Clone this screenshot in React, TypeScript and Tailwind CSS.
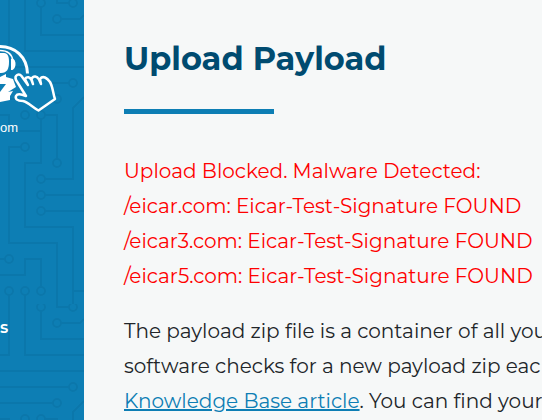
function CircuitBackground() {
  return (
    <svg
      className="absolute inset-0 h-full w-full"
      aria-hidden="true"
      fill="none"
      stroke="#0b77ab"
      strokeWidth="2"
    >
      <defs>
        <pattern id="circuit" width="84" height="304" patternUnits="userSpaceOnUse">
          <path d="M21 147H9V243H57V304M41 119V163H25V227H73V291H84M57 159V115H45M73 304V227" />
          <path d="M41 287V259H25V275H0M0 259H5M73 119V179H45M45 195H84M45 211H84" />
          <path d="M9 0V51H0M9 295V304M25 0V51H84M25 295V304M41 7V35H84M57 0V3H69" />
          <path d="M61 19H80L84 15M0 67H84M0 83H69M0 99H53M0 115H9V131H41M73 120V108L84 97" />
          <circle cx="41" cy="3" r="4" />
          <circle cx="73" cy="3" r="4" />
          <circle cx="57" cy="19" r="4" />
          <circle cx="73" cy="83" r="4" />
          <circle cx="57" cy="99" r="4" />
          <circle cx="25" cy="115" r="4" />
          <circle cx="41" cy="115" r="4" />
          <circle cx="25" cy="147" r="4" />
          <circle cx="57" cy="163" r="4" />
          <circle cx="41" cy="179" r="4" />
          <circle cx="41" cy="195" r="4" />
          <circle cx="41" cy="211" r="4" />
          <circle cx="9" cy="259" r="4" />
          <circle cx="9" cy="291" r="4" />
          <circle cx="25" cy="291" r="4" />
          <circle cx="41" cy="291" r="4" />
        </pattern>
      </defs>
      <rect width="100%" height="100%" fill="url(#circuit)" stroke="none" />
    </svg>
  );
}

function Logo() {
  return (
    <svg className="h-[74px] w-[60px]" viewBox="0 42 60 74" fill="none" aria-hidden="true">
      <path d="M-1 46.500C15 46 27 57 27.500 73.500" stroke="white" strokeWidth="3" />
      <path d="M0 50.500C8 50.500 12 54 13 61" stroke="white" strokeWidth="1.500" />
      <path d="M-1 53H4C8 53 9 57 9 62C9 69 7 73 1 73H-1Z" fill="white" />
      <path d="M11 59C14 58 15.500 61 15.500 64C15.500 68 13 70.500 11 70Z" fill="white" />
      <path d="M0 77L6 74L6 77L13 79L16 87L8 92L13 91L10 96L10 100L0 102V92L6 84L0 84Z" fill="white" />
      <path
        d="M16 80C14 75 19 73 21.500 76L28 85L25 79C27 76 30 77 31.500 80L33 84L31.500 79C33.500 75 37 76 39 79.500L41 84L40 79C43 75 47 78 50 82C53 87 53 94 55 99L38.500 110.500C32 107 28 102 23 101C17 101 15 99 16 96C17 94 21 94 26 96Z"
        fill="#0d7eb4"
        stroke="white"
        strokeWidth="2.500"
        strokeLinejoin="round"
      />
    </svg>
  );
}

export default function App() {
  return (
    <div className="flex h-screen overflow-hidden bg-[#f6f8f8] font-['Montserrat','Inter',sans-serif]">
      <aside className="relative w-21 shrink-0 overflow-hidden bg-[#0d7eb4] text-white">
        <CircuitBackground />
        <div className="relative pt-[42px]">
          <Logo />
          <p className="mt-0.5 font-['Liberation_Sans',sans-serif] text-[13px] leading-5">om</p>
          <nav className="mt-[178px]">
            <a href="#s" className="block text-base leading-6 font-semibold">
              s
            </a>
          </nav>
        </div>
      </aside>
      <main className="min-w-0 flex-1 pt-[39px] pl-10">
        <h1 className="text-[32px] leading-10 font-bold whitespace-nowrap text-[#004b70]">Upload Payload</h1>
        <div className="mt-[30px] h-[5px] w-[150px] bg-[#0d7eb4]" />
        <p className="mt-10 text-xl leading-[35px] whitespace-nowrap text-[#ff0000]">
          Upload Blocked. Malware Detected:
          <br />
          /eicar.com: Eicar-Test-Signature FOUND
          <br />
          /eicar3.com: Eicar-Test-Signature FOUND
          <br />
          /eicar5.com: Eicar-Test-Signature FOUND
        </p>
        <p className="mt-5 text-xl leading-[35px] whitespace-nowrap text-[#212529]">
          The payload zip file is a container of all you
          <br />
          software checks for a new payload zip eac
          <br />
          <a href="#kb" className="text-[#0d7eb4] underline">
            Knowledge Base article
          </a>
          . You can find your
        </p>
      </main>
    </div>
  );
}
